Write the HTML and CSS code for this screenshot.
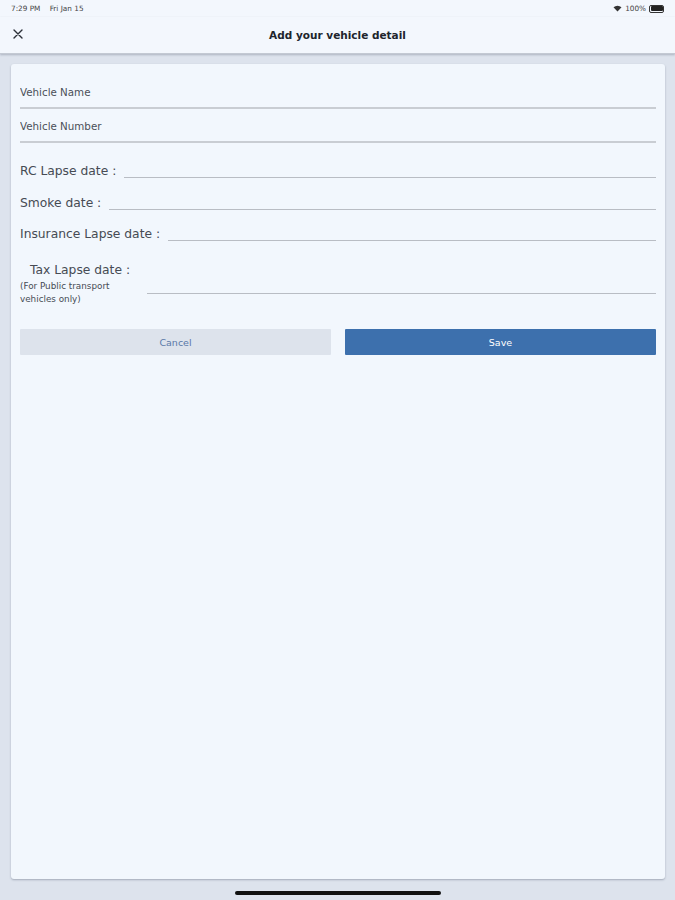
FILE: index.html
```html
<!DOCTYPE html>
<html lang="en">
<head>
    <meta charset="UTF-8">
    <meta name="viewport" content="width=device-width, initial-scale=1.0">
    <title>Add your vehicle detail</title>
    <link rel="stylesheet" href="styles.css">
</head>
<body>
    <div class="status-bar">
        <span class="status-time">7:29 PM&nbsp;&nbsp;&nbsp;&nbsp;Fri Jan 15</span>
        <span class="status-right">
            <svg width="9" height="7" viewBox="0 0 9 7"><path d="M0.5 2.2 A6 6 0 0 1 8.5 2.2 L4.5 6.5 Z" fill="#333"/></svg>
            <span>100%</span>
            <span class="battery"><span class="battery-level"></span></span>
        </span>
    </div>

    <header class="nav-bar">
        <svg class="close-icon" width="10" height="10" viewBox="0 0 10 10">
            <path d="M1 1 L9 9 M9 1 L1 9" stroke="#2b2f38" stroke-width="1.4" stroke-linecap="round"/>
        </svg>
        <h1>Add your vehicle detail</h1>
    </header>

    <main class="page">
        <div class="card">
            <div class="text-field">
                <input type="text" placeholder="Vehicle Name">
            </div>
            <div class="text-field">
                <input type="text" placeholder="Vehicle Number">
            </div>

            <div class="date-row first-date">
                <label>RC Lapse date :</label>
                <span class="date-line"></span>
            </div>
            <div class="date-row">
                <label>Smoke date :</label>
                <span class="date-line"></span>
            </div>
            <div class="date-row">
                <label>Insurance Lapse date :</label>
                <span class="date-line"></span>
            </div>
            <div class="date-row tax-row">
                <div class="tax-label">
                    <label>Tax Lapse date :</label>
                    <small>(For Public transport vehicles only)</small>
                </div>
                <span class="date-line"></span>
            </div>

            <div class="button-container">
                <button class="btn-cancel">Cancel</button>
                <button class="btn-save">Save</button>
            </div>
        </div>
    </main>

    <div class="home-indicator"></div>
</body>
</html>
```

FILE: styles.css
```css
body {
    margin: 0;
    width: 675px;
    height: 900px;
    background: #dde3ed;
    font-family: 'DejaVu Sans', 'Liberation Sans', sans-serif;
    color: #3a3f48;
    display: flex;
    flex-direction: column;
    overflow: hidden;
}
.status-bar {
    height: 17px;
    background: #f3f7fd;
    display: flex;
    justify-content: space-between;
    align-items: center;
    padding: 0 11px;
    font-size: 7.3px;
    color: #444;
}
.status-right {
    display: flex;
    align-items: center;
    gap: 3px;
}
.battery {
    width: 12px;
    height: 5px;
    border: 1px solid #333;
    border-radius: 2px;
    padding: 0.5px;
    display: flex;
}
.battery-level {
    flex: 1;
    background: #222;
    border-radius: 1px;
}
.nav-bar {
    height: 36px;
    background: #f3f7fd;
    display: flex;
    align-items: center;
    justify-content: center;
    position: relative;
    box-shadow: 0 1px 2px rgba(80, 90, 110, 0.35);
    border-bottom: 1px solid #c3c9d3;
}
.close-icon {
    position: absolute;
    left: 13px;
    top: 12px;
}
.nav-bar h1 {
    margin: 0;
    font-size: 10.5px;
    font-weight: bold;
    color: #20242c;
}
.page {
    flex: 1;
    padding: 10px 10px 21px 11px;
    display: flex;
}
.card {
    flex: 1;
    background: #f2f7fd;
    border-radius: 3px;
    box-shadow: 0 1px 2px rgba(90, 100, 120, 0.45);
    padding: 15px 9px 0 9px;
}
.text-field input {
    display: block;
    width: 100%;
    box-sizing: border-box;
    border: none;
    border-bottom: 2px solid #c9cdd3;
    background: transparent;
    font-family: inherit;
    font-size: 10.3px;
    line-height: 14px;
    height: 28px;
    padding: 4px 0 8px 0;
    margin-top: 2px;
    color: #333;
    outline: none;
}
.text-field input::placeholder {
    color: #4a4f58;
}
.text-field + .text-field {
    margin-top: 6px;
}
.date-row {
    display: flex;
    align-items: flex-end;
    gap: 8px;
    margin-top: 15.5px;
}
.first-date {
    margin-top: 20px;
}
.date-row label {
    font-size: 12.3px;
    color: #464b54;
    white-space: nowrap;
    line-height: 16px;
}
.date-line {
    flex: 1;
    border-bottom: 1.5px solid #b9bdc4;
    margin-bottom: 1px;
}
.tax-row {
    margin-top: 20px;
    gap: 17px;
}
.tax-label {
    display: flex;
    flex-direction: column;
    width: 110px;
}
.tax-label label {
    padding-left: 10px;
    margin-bottom: 2px;
}
.tax-label small {
    font-size: 8.8px;
    line-height: 13px;
    color: #464b54;
}
.tax-row .date-line {
    margin-bottom: 12px;
}
.button-container {
    display: flex;
    justify-content: space-between;
    gap: 14px;
    margin-top: 23px;
}
.button-container button {
    flex: 1;
    height: 26px;
    border: none;
    border-radius: 1px;
    font-family: inherit;
    font-size: 9.5px;
}
.btn-cancel {
    background: #dde3ec;
    color: #5a78a8;
}
.btn-save {
    background: #3d70ad;
    color: #fff;
}
.home-indicator {
    position: absolute;
    left: 235px;
    top: 891px;
    width: 206px;
    height: 4px;
    background: #111;
    border-radius: 2px;
}
```
